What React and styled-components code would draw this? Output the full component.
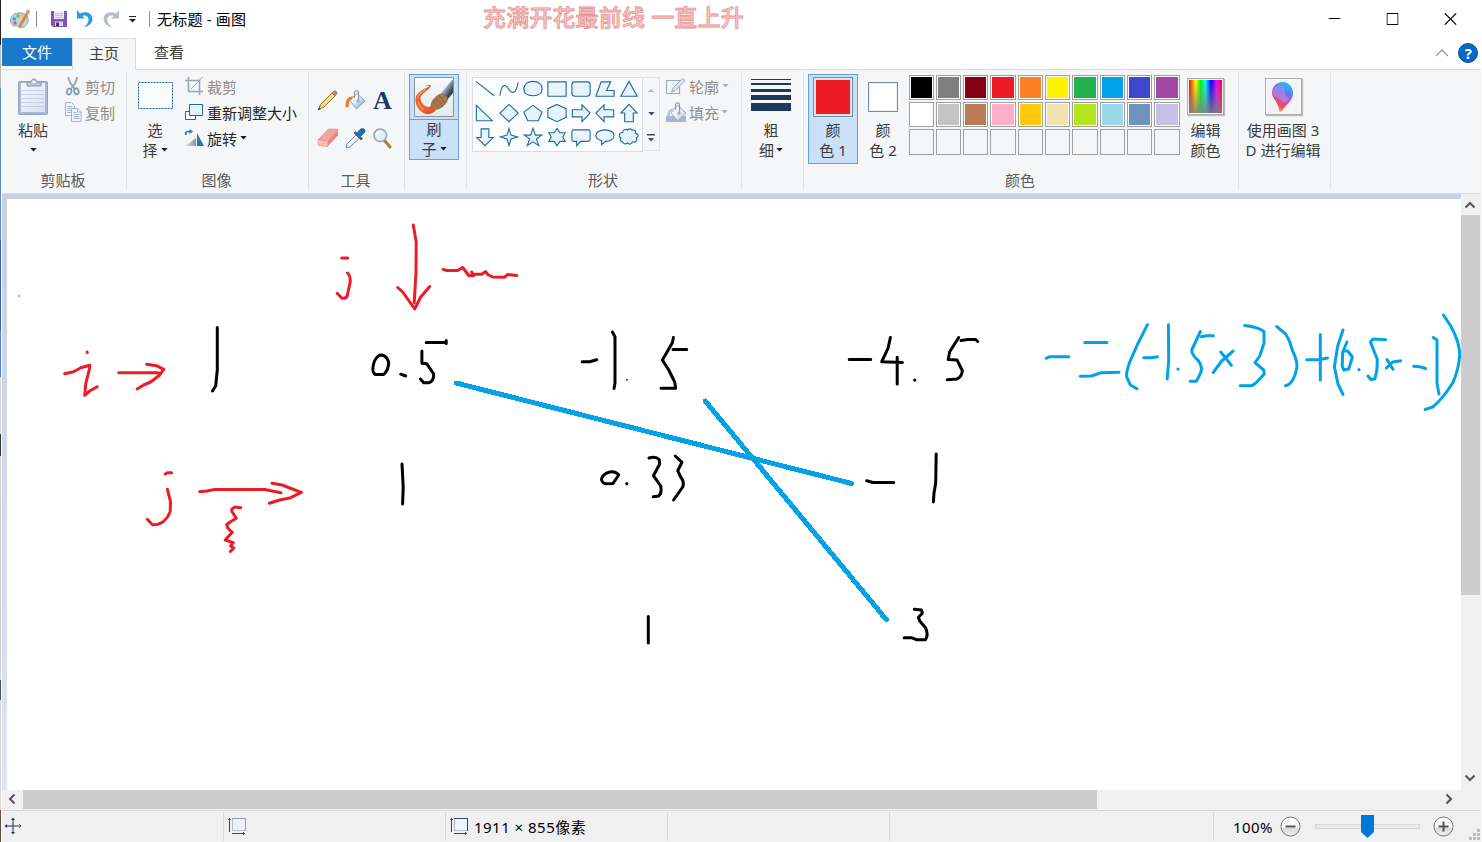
import React from "react";
import styled, { createGlobalStyle } from "styled-components";

const Global = createGlobalStyle`
  html, body { margin: 0; padding: 0; overflow: hidden; }
  body { font-family: "Noto Sans", "Noto Sans CJK SC", sans-serif; font-size: 15px; color: #000; }
  * { box-sizing: border-box; }
  svg { display: block; flex: none; }
`;

const Desktop = styled.div`
  width: 1482px;
  height: 842px;
  display: flex;
  position: relative;
  background: #fff;
`;
const DesktopEdge = styled.div`
  width: 1px;
  background: linear-gradient(#222 0 45px, #b9b4ae 45px 88px, #5a8ac6 88px 240px, #3f5f94 240px 330px, #4f80cf 330px 377px, #dcd8d4 377px 434px, #333 434px 456px, #d4cfd0 456px 680px, #456 680px 700px, #d9d4d2 700px 810px, #6b4a42 810px);
`;
const Window = styled.div`
  flex: 1;
  display: flex;
  flex-direction: column;
  padding: 0 1px 0 1px;
`;

const TitleBar = styled.header`
  height: 38px;
  display: flex;
  align-items: center;
  padding-left: 8px;
`;
const QuickItem = styled.span`
  display: flex;
  margin-left: ${(p) => p.$gap}px;
`;
const Rule = styled.span`
  width: 1px;
  height: 16px;
  margin-left: ${(p) => p.$gap}px;
  background: #8c8c8c;
`;
const Title = styled.span`
  margin-left: 7px;
  padding-bottom: 2px;
  letter-spacing: 0.2px;
  white-space: pre;
`;
const WindowButtons = styled.div`
  margin-left: auto;
  display: flex;
  gap: 46px;
  padding-right: 24px;
  transform: translateX(-0.5px);
`;
const Ticker = styled.div`
  position: absolute;
  left: 483px;
  top: 1px;
  line-height: 32px;
  font-size: 23px;
  font-weight: 500;
  letter-spacing: 0.15px;
  white-space: pre;
  color: #ffc6c6;
  -webkit-text-stroke: 0.8px #e39494;
`;

const TabRow = styled.nav`
  height: 32px;
  display: flex;
  border-bottom: 1px solid #dadbdc;
  position: relative;
`;
const Tab = styled.div`
  width: ${(p) => p.$w}px;
  height: ${(p) => (p.$kind === "file" ? 28 : 32)}px;
  line-height: ${(p) => (p.$kind === "active" ? 28 : 29)}px;
  text-align: center;
  color: ${(p) => (p.$kind === "file" ? "#fff" : "#3b3b3b")};
  background: ${(p) => ({ file: "#1979ca", active: "#f5f6f7" })[p.$kind] || "none"};
  border: ${(p) => (p.$kind === "active" ? "1px solid #dadbdc" : "0")};
  border-bottom: 0;
`;
const TabTools = styled.div`
  margin-left: auto;
  display: flex;
  align-items: center;
  gap: 10px;
  padding: 0 3px 2px 0;
`;

const Ribbon = styled.section`
  height: 124px;
  display: flex;
  padding: 2px 0 3px;
  background: #f5f6f7;
  border-bottom: 1px solid #dadbdc;
`;
const GroupBox = styled.div`
  width: ${(p) => p.$w}px;
  display: flex;
  flex-direction: column;
  border-right: 1px solid #e2e3e4;
`;
const GroupBody = styled.div`
  height: 98px;
  display: flex;
  align-items: flex-start;
  padding: 2px 0 0 ${(p) => p.$pad}px;
`;
const GroupLabel = styled.div`
  line-height: 20px;
  padding-right: 2px;
  text-align: center;
  color: #5a5a5a;
`;
const BigButton = styled.div`
  width: ${(p) => p.$w}px;
  height: ${(p) => p.$h || 90}px;
  flex: none;
  display: flex;
  flex-direction: column;
  align-items: center;
  color: #3b3b3b;
  background: ${(p) => (p.$on ? "#c9e0f7" : "none")};
  box-shadow: ${(p) => (p.$on ? "inset 0 0 0 1px #62a2e4" : "none")};
`;
const BigIcon = styled.div`
  height: ${(p) => p.$h || 47}px;
  width: 100%;
  display: flex;
  align-items: center;
  justify-content: center;
  padding-bottom: ${(p) => p.$lift ?? 1}px;
  border-bottom: ${(p) => (p.$split ? "1px solid #62a2e4" : "0")};
`;
const Line = styled.div`
  height: 20px;
  line-height: 18px;
  padding-bottom: 2px;
  display: flex;
  align-items: center;
  justify-content: center;
  gap: ${(p) => p.$gap || 0}px;
  white-space: pre;
`;
const SmallColumn = styled.div`
  display: flex;
  flex-direction: column;
  margin: -1px 0 0 ${(p) => p.$gap}px;
`;
const SmallButton = styled.div`
  height: 26px;
  display: flex;
  align-items: center;
  gap: ${(p) => p.$gap || 4}px;
  color: ${(p) => (p.$off ? "#8d8d8d" : "#262626")};
`;
const ToolGrid = styled.div`
  display: grid;
  grid-template-columns: 27px 28px 27px;
  grid-auto-rows: 38px;
  place-items: center;
  padding: 7px 0 0;
`;
const LetterIcon = styled.span`
  font: bold 26px/25px "Liberation Serif", serif;
  color: #1f3a63;
`;
const Gallery = styled.div`
  display: flex;
  margin-top: 3px;
`;
const Shapes = styled.div`
  width: 171px;
  height: 75px;
  display: grid;
  grid-template-columns: repeat(7, 24px);
  grid-auto-rows: 24px;
  background: #fbfcfd;
  border: 1px solid #dcdddf;
`;
const Spinner = styled.div`
  width: 17px;
  height: 74px;
  display: grid;
  grid-template-rows: 1fr 1fr 1fr;
  place-items: center;
  border: 1px solid #e2e3e5;
  border-left: 0;
`;
const Bars = styled.div`
  width: 40px;
  height: 32px;
  display: flex;
  flex-direction: column;
  justify-content: space-between;
`;
const Bar = styled.span`
  height: ${(p) => p.$h}px;
  background: #1e395b;
`;
const Chip = styled.span`
  width: ${(p) => p.$s}px;
  height: ${(p) => p.$s}px;
  padding: ${(p) => p.$inset}px;
  background: ${(p) => p.$c} content-box;
  border: 1px solid #7f8a95;
  box-shadow: inset 0 0 0 1px ${(p) => (p.$s > 30 ? "#dceaf7" : "#f0f0f0")};
`;
const Palette = styled.div`
  margin: 1px 0 0 1px;
  flex: none;
  display: grid;
  grid-template-columns: 25px 25px 25px 26px 25px 25px 26px 25px 25px 26px;
  grid-template-rows: 25px 25px 26px;
  gap: 2px;
`;
const Swatch = styled.span`
  border: 1px solid #a0a0a0;
  background: ${(p) => p.$c || "#f5f6f7"};
  box-shadow: inset 0 0 0 1px ${(p) => (p.$c ? "#fff" : "#f5f6f7")};
`;
const Framed = styled.span`
  width: 37px;
  height: 37px;
  padding: 1px;
  border: 1px solid #adadad;
  box-shadow: 1px 1px 1px #bbb;
  background-color: #fff;
  background-image: ${(p) => (p.$rainbow ? "linear-gradient(#80808000, #808080e0), linear-gradient(90deg,#f00,#ff0 20%,#0f0 35%,#0ff 50%,#00f 67%,#f0f 85%,#f00)" : "linear-gradient(#f3f3f3, #f3f3f3)")};
  background-origin: content-box;
  background-clip: content-box;
  display: flex;
  align-items: center;
  justify-content: center;
`;

const Middle = styled.main`
  height: 596px;
  display: flex;
`;
const Workspace = styled.div`
  width: 1459px;
  padding: 5px 0 0 5px;
  background: linear-gradient(#c7d0e2, #dbe5f3);
`;
const Paper = styled.div`
  height: 591px;
  background: #fff;
`;
const VScroll = styled.div`
  width: 20px;
  display: flex;
  flex-direction: column;
  background: #f0f0f0;
`;
const HScroll = styled.div`
  height: 20px;
  display: flex;
  background: #f0f0f0;
`;
const ScrollEnd = styled.div`
  width: ${(p) => p.$w}px;
  height: ${(p) => p.$h}px;
  margin: ${(p) => p.$m || 0};
  display: flex;
  align-items: center;
  justify-content: center;
`;
const ScrollThumb = styled.div`
  width: ${(p) => p.$w}px;
  height: ${(p) => p.$h}px;
  background: #cdcdcd;
`;
const Status = styled.footer`
  height: 32px;
  display: flex;
  background: #f0f0f0;
  border-top: 1px solid #d7d7d7;
`;
const StatusCell = styled.div`
  width: ${(p) => p.$w}px;
  margin: 1px 0;
  padding: 0 0 1px ${(p) => p.$pad ?? 4}px;
  display: flex;
  align-items: center;
  gap: 5px;
  letter-spacing: 0.48px;
  border-right: 1px solid #d7d7d7;
`;
const ZoomBar = styled.div`
  flex: 1;
  display: flex;
  align-items: center;
  padding-left: 19px;
`;
const ZoomValue = styled.span`
  width: 47px;
  letter-spacing: 0.4px;
`;
const Track = styled.div`
  width: 105px;
  height: 5px;
  margin: 0 13px 0 14px;
  background: #e7eaea;
  border: 1px solid #d6d6d6;
  display: flex;
  align-items: center;
  padding-left: 45px;
`;
const Grip = styled.div`
  margin-left: auto;
  align-self: flex-end;
`;

const Caret = ({ c = "#1e1e1e" }) => (
  <svg width="7" height="4" viewBox="0 0 7 4"><path d="M.3 0h6.400L3.500 3.600z" fill={c} /></svg>
);
const Chevron = ({ d, c = "#555", w = 2 }) => (
  <svg width="12" height="12" viewBox="0 0 12 12"><path d={d} fill="none" stroke={c} strokeWidth={w} /></svg>
);

const PaletteLogo = () => (
  <svg width="21" height="20" viewBox="0 0 21 20">
    <path d="M8 4C3 4.500 .5 8 .6 12c.1 4 3 5.500 5.500 4.800 1.500-.4 2 .8 3.500 1.500 4 1.200 8.500-2.500 8.600-7.500C18.300 6 13.500 3.200 8 4z" fill="#b8d8ea" stroke="#7ea5bd" />
    <circle cx="8" cy="7" r="1.900" fill="#7fc34c" /><circle cx="4.300" cy="10" r="1.700" fill="#4b93d5" />
    <circle cx="5" cy="14" r="1.700" fill="#de6550" /><circle cx="12.500" cy="6.500" r="1.700" fill="#edc84a" />
    <path d="M18 3L10 17" stroke="#d88932" strokeWidth="2.800" strokeLinecap="round" />
    <path d="M16 1.500l3-1 .8 3.500-3 2z" fill="#d49a72" />
  </svg>
);
const SaveIcon = () => (
  <svg width="16" height="16" viewBox="0 0 16 16">
    <path d="M0 0h16v16H2l-2-2z" fill="#7d57b5" /><path d="M3 0h10v8H3z" fill="#f0eaf8" />
    <path d="M4 2.500h8M4 4.500h8M4 6.500h8" stroke="#c6b7dc" /><path d="M4 10.500h8V15H4z" fill="#d8d8df" /><path d="M5 11.500h3V15H5z" fill="#4a3570" />
  </svg>
);
const TurnIcon = ({ flip, c }) => (
  <svg width="18" height="18" viewBox="0 0 18 18">
    <g transform={flip ? "translate(18 0) scale(-1 1)" : undefined}>
      <path d="M1 0v8.500h8L6.300 6C10 4.500 13.300 7 12.400 11c-.5 2.500-2.200 4.500-4.600 6.200C13.500 16 17 12.500 16.400 8 15.600 2.500 9 .6 4 3.600z" fill={c} />
    </g>
  </svg>
);
const MenuMark = () => (
  <svg width="7" height="7" viewBox="0 0 7 7"><path d="M0 .5h7" stroke="#222" /><path d="M0 3h7L3.500 6.500z" fill="#222" /></svg>
);
const ClipboardIcon = () => (
  <svg width="34" height="38" viewBox="-1 0 34 38">
    <defs><linearGradient id="pg" x2="1" y2="1"><stop stopColor="#f8fbff" /><stop offset="1" stopColor="#d3e0f1" /></linearGradient></defs>
    <rect x="1.500" y="3.500" width="29" height="33" rx="1.500" fill="#a9b7d0" stroke="#94a3c2" />
    <path d="M4 5h24v29H4z" fill="url(#pg)" />
    <path d="M5 12.500h22M5 16.500h22M5 20.500h22M5 24.500h22M5 28.500h22" stroke="#c3d0e4" />
    <path d="M10 4h4c0-4 6-4 6 0h4v4H10z" fill="#b6c3d8" stroke="#8a99b7" /><path d="M15.500 3h3v2h-3z" fill="#f5f6f7" />
  </svg>
);
const ScissorsIcon = () => (
  <svg width="16" height="20" viewBox="0 0 16 20" fill="none">
    <path d="M3.500 1c0 4 2 7 6.500 12M12 1c0 4-2 7-6 12" stroke="#9aa9c2" strokeWidth="2" />
    <ellipse cx="4.300" cy="15.500" rx="2.200" ry="3" stroke="#8597b5" strokeWidth="1.800" transform="rotate(15 4 15)" />
    <ellipse cx="11.300" cy="15.500" rx="2.200" ry="3" stroke="#8597b5" strokeWidth="1.800" transform="rotate(-15 11 15)" />
  </svg>
);
const CopyIcon = () => (
  <svg width="17" height="20" viewBox="0 0 17 20" fill="#f1f6fc" stroke="#a3b3cc">
    <path d="M.5.5h6l3 3v10h-9z" /><path d="M2 4.500h5M2 6.500h5M2 8.500h5M2 10.500h5" />
    <path d="M6.500 6.500h6l3.500 3V19.500H6.500z" /><path d="M12.500 6.500v3.500h3.500M8.500 10.500h3M8.500 12.500h6M8.500 14.500h6M8.500 16.500h6" />
  </svg>
);
const SelectIcon = () => (
  <svg width="36" height="27" viewBox="-1 0 36 27"><rect x=".5" y=".5" width="34" height="26" fill="#f9fbfd" stroke="#1464a5" strokeDasharray="2 1" /></svg>
);
const CropIcon = () => (
  <svg width="18" height="18" viewBox="0 0 18 18" fill="none" stroke="#94a5bf">
    <path d="M0 3.500h14.500V18M3.500 0v14.500H18" strokeWidth="1.600" /><path d="M17.500 0L6 12" />
  </svg>
);
const ResizeIcon = () => (
  <svg width="18" height="16" viewBox="0 0 18 16" stroke="#1b66a9">
    <path d="M.5 7.500h10v8H.5z" fill="#fff" /><path d="M4.500.5h13v11h-13z" fill="#e7f3f9" /><path d="M5.500 1.500h11v9" fill="none" stroke="#fff" />
  </svg>
);
const RotateIcon = () => (
  <svg width="19" height="18" viewBox="0 0 19 18">
    <defs><linearGradient id="rg" x2="1"><stop stopColor="#e6e6e6" /><stop offset="1" stopColor="#939393" /></linearGradient></defs>
    <path d="M0 17h11V9z" fill="url(#rg)" /><path d="M12 4v13h7z" fill="#2878b5" /><path d="M.8 6V4.500C.8 3 2 2.500 3 2.500h2" fill="none" stroke="#1f78d0" strokeWidth="1.600" /><path d="M4.500 0L8 2.500 4.500 5z" fill="#1f78d0" />
  </svg>
);
const PencilIcon = () => (
  <svg width="22" height="22" viewBox="0 0 22 22">
    <path d="M1.500 20.500l2-5L15 4l3 3L7 18z" fill="#f4d371" stroke="#806024" strokeWidth=".8" /><path d="M5 16.500L16.500 5" stroke="#fff2b5" /><path d="M1 21l1-3 2 2z" fill="#333" />
    <path d="M15 4L17 2c1.500-.8 3.800 1.300 3 3l-2 2z" fill="#db7474" stroke="#788b78" strokeWidth=".7" />
  </svg>
);
const BucketIcon = ({ off }) => (
  <svg width="21" height="21" viewBox="0 0 21 21">
    <defs><linearGradient id={off ? "bo" : "bk"} x2="1" y2="1"><stop offset=".3" stopColor="#fff" /><stop offset="1" stopColor={off ? "#b5c3d9" : "#5ba2dc"} /></linearGradient></defs>
    {off && <path d="M0 14h20v6H0z" fill="#a7b5ce" />}
    <path d="M4.500 10L12 3.500l8 7.500-8.500 8z" fill={off ? "url(#bo)" : "url(#bk)"} stroke={off ? "#9aaac4" : "#7fa7cd"} />
    <path d="M9.500 8V3c0-3 4-3 4 0v8" fill="none" stroke="#9299a3" strokeWidth="1.200" /><circle cx="13" cy="11" r="1.500" fill="#9aa5b4" />
    <path d={off ? "M8 6.500C4 6 1 9 1 14h3c0-3 1-4 4-4.500z" : "M8 6.500C3 6 .5 9 .5 17c3 1.500 4-1 3.500-3 0-3 1-4 3-4.500z"} fill={off ? "#bccade" : "#ee7a45"} />
  </svg>
);
const EraserIcon = () => (
  <svg width="22" height="20" viewBox="0 0 22 20">
    <path d="M10.500 2Q11 1 12.500 1l7.500.3Q21.300 1.500 20.500 3L11 13.300 1.500 11.500z" fill="#f7a3a3" stroke="#dd8a8a" strokeWidth=".8" />
    <path d="M11 13.300L21 2.500v5L10.500 18.500z" fill="#e58585" /><path d="M1.300 11.500l9.700 1.800-.5 5.400-8.700-1.200q-1-.3-.9-1.500z" fill="#fbbdb0" stroke="#dd8a8a" strokeWidth=".6" />
  </svg>
);
const PickerIcon = () => (
  <svg width="21" height="21" viewBox="0 0 21 21">
    <path d="M1 20l1-4L11 7l3.300 3.300L5 19z" fill="#e9f1f6" stroke="#748ba0" /><path d="M9 5l7 7 1.500-1.500-2-2C17 7 20 5 20 3c0-3-3.500-3-5-1.500L12 5l-1.500-1.500z" fill="#246eae" stroke="#174f86" strokeWidth=".6" />
  </svg>
);
const MagnifierIcon = () => (
  <svg width="19" height="21" viewBox="0 0 19 21">
    <path d="M11.500 12.500l5.500 6.500" stroke="#a07a51" strokeWidth="3" strokeLinecap="round" /><circle cx="7.300" cy="7.300" r="6.300" fill="#dff0fa" stroke="#9ba5ad" strokeWidth="1.500" /><path d="M4 7c0-2 1.500-3.500 3.500-3.500" stroke="#fff" strokeWidth="2" fill="none" />
  </svg>
);
const BrushIcon = () => (
  <svg width="40" height="40" viewBox="0 0 40 40">
    <defs>
      <linearGradient id="bf" x2="0" y2="1"><stop stopColor="#f8fafb" /><stop offset="1" stopColor="#e1eced" /></linearGradient>
      <linearGradient id="bh" x2=".9" y2="1"><stop offset=".2" stopColor="#f4f6f8" /><stop offset=".5" stopColor="#8497aa" /><stop offset=".75" stopColor="#33455a" /></linearGradient>
    </defs>
    <path d="M.5.5h39v39H.5z" fill="url(#bf)" stroke="#8a959c" />
    <path d="M11.500 10C13 7.500 16.500 7 16.800 8.800 17 11 14 12.500 11 15 6 18.500 5.500 22 8 26c2 3 5 4.500 9 4l4 4c-3 3-7.500 4-10.500 2.500C4.500 33.500 1 28 1.500 21.500 2 16.500 8 12.500 12 11c2-.8 3-1.300 3.300-2-1-.5-2.300.2-3.800 1z" fill="#ee5f2e" />
    <path d="M3.500 21c1-4 4-6.500 8-8.500M4 25c1 3 3 6 6 7.500" fill="none" stroke="#ff9b70" strokeWidth="1.200" />
    <path d="M38.500 2.500L27 16l6.500 6.500 5.500-6.500V3z" fill="url(#bh)" />
    <path d="M17.500 26.500c1-4 5.500-8.500 9.500-9.500 5-.8 8 4 5.500 8-2.500 4.500-7 7-11 7.300-2.500-.6-4.500-3-4-5.800z" fill="#a57a4c" stroke="#85603a" strokeWidth=".8" />
    <path d="M19 25c3 2 5 4 6 6M21.500 22c4 2 6 5 6.500 7.500M25 19c3 2 5 4 5.500 7" stroke="#75512f" strokeDasharray="1 1" fill="none" />
    <path d="M10.500 36c5 1.500 9.500 0 12-3.500-2.500-.3-5-2.500-5-6-1.500 4-3 7-7 9.500z" fill="#e4552b" />
  </svg>
);
const OutlineIcon = () => (
  <svg width="20" height="18" viewBox="0 0 20 18" fill="none" stroke="#9aaac2">
    <path d="M14 3.500H.5v13h13V10" strokeWidth="1.200" /><path d="M5.500 15l1.500-4L16.500 1.500l2.500 2L9.500 13.500z" fill="#dce5f0" />
  </svg>
);
const BalloonIcon = () => (
  <svg width="24" height="32" viewBox="0 0 24 32">
    <defs><linearGradient id="bl" x1=".7" x2=".3" y2="1"><stop stopColor="#18c7f0" /><stop offset=".35" stopColor="#6e72ed" /><stop offset=".6" stopColor="#d2559e" /><stop offset=".8" stopColor="#e94b66" /><stop offset="1" stopColor="#ffbd22" /></linearGradient></defs>
    <path d="M12 1C5 1 1 6 1 12c0 6 7 9 7 18 1 1 2 .8 3 0 2-5 11-9 11-18 0-7-5-11-10-11z" fill="url(#bl)" /><path d="M2 12c0-6 5-9 9-8 5 2 0 10 8 14l-7 4C11 17 3 17 2 12z" fill="#b299ff" opacity=".45" />
  </svg>
);

const SHAPES = [
  "M3 4L22 19", "M3 19C5 5 9 7 12 12s8 6 10-7", "M3 12c0-5 4-8 9.500-8S22 7 22 12s-4 7-9.500 7S3 17 3 12z", "M3 4.500h19v15H3z",
  "M6 4.500h13q3 0 3 3v9q0 3-3 3H6q-3 0-3-3v-9q0-3 3-3z", "M8.500 4.500h10l-4.500 9h8v6H3z", "M12.500 4L21 19.500H4z",
  "M3.500 4v16H20z", "M12.500 3L22 12l-9.500 9L3 12z", "M12.500 4L22 11l-4 9H7L3 11z", "M12.500 3L22 7.500v9L12.500 21 3 16.500v-9z",
  "M3.500 8.500h10v-5L22 12l-8.500 9v-5h-10z", "M21.500 8.500h-10v-5L3 12l8.500 9v-5h10z", "M12.500 3L21 12h-4v9H8v-9H4z",
  "M8.500 3.500h8v9H21L12.500 21 4 12.500h4.500z", "M12.500 3l2 7 7 2-7 2-2 7-2-7-7-2 7-2z", "M12.500 3l2.500 7h6.500L16 14l2.500 7-6-4-6 4L9 14l-5.500-4H10z",
  "M12.500 3l3 4.500H21L18.500 12l2.500 4.500h-5.500l-3 4.500-3-4.500H4L6.500 12 4 7.500h5.500z", "M5 4.500h15q2 0 2 2v8q0 2-2 2h-8L8 21v-4.500H5q-2 0-2-2v-8q0-2 2-2z",
  "M9 20v-4C5 15 3 13 3 10.500 3 7 7 4.500 12.500 4.500S22 7 22 10.500 18 16.500 13 16.500z",
  "M6 7c0-3 4-4 5-2 1-2 4-2 5 0 3-1 4 1 3 3 4 1 4 4 1 5 2 3-1 5-4 4-1 3-4 3-5 1-2 2-5 1-5-1-3 0-3-2-2-4-3-2-2-5 2-6z",
];
const PALETTE = [
  "#000000", "#7f7f7f", "#880015", "#ed1c24", "#ff7f27", "#fff200", "#22b14c", "#00a2e8", "#3f48cc", "#a349a4",
  "#ffffff", "#c3c3c3", "#b97a57", "#ffaec9", "#ffc90e", "#efe4b0", "#b5e61d", "#99d9ea", "#7092be", "#c8bfe7",
  ...Array(10).fill(null),
];

const RED = [
  "M342 258L348 258", "M347.800 273Q351 276 350.500 282L347.500 296Q346 299 342 298L337.500 293.300",
  "M413.600 225L416.500 242L416.300 272L414.500 303", "M398 287.500L403 292L415 309L421 297L430 286.500",
  "M443.500 269.300L447 270.500L458 270.500L463 267.500L469 275.500L474 275.500L472 272M475 274.300L482 274.300L486 271.500L488 274.500L493 277L504.500 277.300L508 274.500L517 275.500",
  "M65 373.700L74 371.700L81 367.700L90 365.300L90 368L86 384L85 395.300L90 391L97.500 386.700", "M87.400 352L87.600 352.600",
  "M119 372.700L159 372.700M147 364.300L156.700 365.700L164 369.300L160 375L151 382L144 385L137.400 389",
  "M165.500 474L168 472.700L172 472.700M167.700 489.300L170.800 501.700L170.500 511.700Q168 518 163.600 521.700Q157 525.500 152.500 524.500L147.600 519.300",
  "M200 491.700L207 491L215 489.500L265 489.500L281.300 492.700M272.400 483.300L282.400 485L290 488L301.600 492.300L291 497.700L280 500L269.600 503.300",
  "M241 507.700L234.800 507Q231 509 232.400 511.700L236.600 518.300L232 521L227 524.500L228 528L232.600 532.300L225.500 540L233.500 542.700L231 546L234 548L230.700 551.500",
];
const BLACK = [
  "M217.600 327.500L217.600 370L216 386L212.800 391", "M380 355.300Q375 358 373.600 365Q372 373 376 374.500L384 374.500Q389 370 389 362Q386 354 380 355.300", "M401 374.200L406 376",
  "M422.200 351L422.200 363.300L427 363.700L434 374Q434 382 429 382.700L424 382.700L420.700 379M426.500 342.500L446.500 342.500M446.500 340.500L446.500 343.500", "M402.300 464L403.500 487L402.900 504",
  "M582.500 361.700L590 361.700L597 359.700", "M612.700 332L615.300 336.700L615.300 383L614.300 388.500",
  "M673.700 337.500L672.700 342.700L662.700 360L669 370L675 382L676 388.300L661.300 388.300M673.300 349.600L687 349.600",
  "M849.500 359.500L871 359.500M890.700 337.500L888.300 348.300L882 361.700L902.700 362.500M897.500 357.300L897.500 384", "M914.900 380L915.200 380.200",
  "M959 337.500L950 351.700L948.500 359.500L957.300 360L962.700 370.700Q962 377 957.300 379L947.500 379.700M961.300 340.500L968 339.500L976 339.500L978 341.500",
  "M610 472Q603 474 601.800 479Q602 483 606 483.700L613.300 483.500L619 475Q616 471 610 472M627 483.600L627.200 483.800",
  "M649.300 458Q656 456 659.500 459.500L660 464L653.700 475.700L661 486Q662.500 493 659 496L653.500 496.700",
  "M675.500 456L682.300 462.300L678 470.700L681 477Q685 482 683 487L673.900 500",
  "M867 480.700L873.300 482.500L894 482.500M936.500 454L936 483.300L934.300 493L933.700 502M648.600 616.500L648.600 643",
  "M914.700 609.300L921.700 610L922.700 613.300L918.700 617.300L920 621L926 628Q929 635 925.700 639.700L916.700 639.700L911.700 637.700L904.500 637.700",
];
const BLUE = [
  "M1046.500 358.300L1050 356.700L1069 356.700M1085 342.600L1107.300 342.600M1080.500 376.300L1091.700 376L1101.700 372.700L1119.300 372.300",
  "M1147.700 324.700L1138 344L1130 362Q1126 374 1127 377L1130.700 385L1137.300 388.700M1144 357.700L1152 357.700L1157.700 356.700M1168.700 324.700L1169 360L1167.500 379M1178.200 369L1178.500 369.200",
  "M1200.700 331.500L1192 350Q1192 355 1199 361Q1204 369 1200 375L1196.700 381.300L1190.500 381.300M1201.700 336.700L1207 335.700L1213.700 335.700",
  "M1221 352L1226 358L1231.700 365.300M1233.500 351L1222 361L1213.500 372.500",
  "M1245 325.500Q1259 327 1264.300 331.700L1264.300 343.300L1260 356L1255.300 362.700L1264 370L1264.500 374L1258 381Q1254 386 1250 385.700L1240.500 385.700",
  "M1277 326.500L1286 334Q1291 342 1292.500 350Q1299 363 1296.700 370Q1293 385 1285.700 385.700",
  "M1307 359.700L1319 359.700L1327.700 358M1320.600 334.500L1320.600 380M1343.300 330L1338 346L1334.700 366.700L1338.300 384L1343.300 394.500",
  "M1347.300 342L1343 352L1342.500 366L1344 370L1349 369L1352.700 357L1348 351L1345 351M1359.200 369.500L1359.400 369.800",
  "M1386 339.700L1373.300 339L1370.700 342L1377.500 359Q1378 370 1375 379L1371 379.500L1368.300 376",
  "M1387.300 359.500L1393.300 369.300M1401 360.700L1393 362L1386.700 368M1414 366.300L1420 366.700L1426 368.500M1433.500 337.500L1437.300 340L1437.300 383.300L1439.300 394",
  "M1443.700 315L1451 326Q1460 342 1460 355Q1459 370 1453 383Q1442 400 1433 407L1425.500 409.500",
];
const Drawing = () => (
  <svg width="1454" height="591" viewBox="7.300 199 1454 591" fill="none" strokeWidth="3" strokeLinecap="round" strokeLinejoin="round">
    <g stroke="#ed1c24">{RED.map((d) => <path key={d} d={d} />)}</g>
    <g stroke="#000">{BLACK.map((d) => <path key={d} d={d} />)}</g>
    <g stroke="#00a2e8">{BLUE.map((d) => <path key={d} d={d} />)}</g>
    <path d="M456.500 383L852 483.500M705.500 401L886.700 619.700" stroke="#00a2e8" strokeWidth="5" shapeRendering="crispEdges" />
    <path d="M19 295h1v2h-1z" fill="#d22" /><path d="M626.500 379h1.500v1.500h-1.500z" fill="#000" />
  </svg>
);

const MoveIcon = () => (
  <svg width="18" height="18" viewBox="0 0 18 18" fill="#1e395b"><path d="M8.500 2h1v14h-1zM2 8.500h14v1H2zM9 .5l2 2.500h-4zM9 17.500l-2-2.500h4zM.5 9l2.500-2v4zM17.500 9l-2.500-2v4z" /></svg>
);
const SizeIcon = ({ dotted }) => (
  <svg width="19" height="18" viewBox="0 0 19 18" fill="none" stroke="#2b4a70">
    <rect x="4.500" y="1.500" width="13" height="12" fill={dotted ? "none" : "#eaf5fc"} strokeDasharray={dotted ? "1 1" : undefined} />
    <path d="M4.500 2v11.500M4 13.500h13" stroke="#b7bec8" />
    <path d="M1.500 1v14M4 16.500h13" /><path d="M0 2.500h3M15.500 15v3" strokeWidth=".8" />
  </svg>
);
const RoundButton = ({ plus }) => (
  <svg width="21" height="21" viewBox="0 0 21 21">
    <defs><linearGradient id="rb" x2="0" y2="1"><stop stopColor="#fff" /><stop offset=".55" stopColor="#f5f5f5" /><stop offset=".6" stopColor="#d9d9d9" /><stop offset="1" stopColor="#f2f2f2" /></linearGradient></defs>
    <circle cx="10.500" cy="10.500" r="9.500" fill="url(#rb)" stroke="#777" /><path d={plus ? "M5.500 10.500h10M10.500 5.500v10" : "M5.500 10.500h10"} stroke="#555" strokeWidth="2" />
  </svg>
);

const Group = ({ w, pad, label, children }) => (
  <GroupBox $w={w}>
    <GroupBody $pad={pad}>{children}</GroupBody>
    <GroupLabel>{label}</GroupLabel>
  </GroupBox>
);

export default function App() {
  return (
    <Desktop>
      <Global />
      <DesktopEdge />
      <Window>
        <TitleBar>
          <PaletteLogo />
          <Rule $gap={5} />
          <QuickItem $gap={14}><SaveIcon /></QuickItem>
          <QuickItem $gap={9}><TurnIcon c="#2b9be0" /></QuickItem>
          <QuickItem $gap={8}><TurnIcon c="#b2bfd0" flip /></QuickItem>
          <QuickItem $gap={9}><MenuMark /></QuickItem>
          <Rule $gap={13} />
          <Title>无标题 - 画图</Title>
          <WindowButtons>
            <Chevron d="M0 5.500h12" c="#000" w={1} />
            <Chevron d="M.5.500h11v11H.5z" c="#000" w={1} />
            <Chevron d="M0 0l12 12M12 0L0 12" c="#000" w={1.100} />
          </WindowButtons>
        </TitleBar>

        <TabRow>
          <Tab $w={70} $kind="file">文件</Tab>
          <Tab $w={64} $kind="active">主页</Tab>
          <Tab $w={66}>查看</Tab>
          <TabTools>
            <Chevron d="M0 9l6-6 6 6" c="#9a9a9a" w={1.300} />
            <svg width="20" height="20" viewBox="0 0 20 20">
              <circle cx="10" cy="10" r="9.500" fill="#0669c7" stroke="#0a4f93" />
              <text x="10.300" y="15.500" textAnchor="middle" fontSize="15" fontWeight="700" fill="#fff">?</text>
            </svg>
          </TabTools>
        </TabRow>

        <Ribbon>
          <Group w={125} pad={10} label="剪贴板">
            <BigButton $w={42}>
              <BigIcon><ClipboardIcon /></BigIcon>
              <Line>粘贴</Line>
              <Line>{" "}<Caret /></Line>
            </BigButton>
            <SmallColumn $gap={11}>
              <SmallButton $off><ScissorsIcon />剪切</SmallButton>
              <SmallButton $off $gap={3}><CopyIcon />复制</SmallButton>
            </SmallColumn>
          </Group>

          <Group w={182} pad={9} label="图像">
            <BigButton $w={38}>
              <BigIcon $lift={4}><SelectIcon /></BigIcon>
              <Line>选</Line>
              <Line $gap={3}>择<Caret /></Line>
            </BigButton>
            <SmallColumn $gap={11}>
              <SmallButton $off><CropIcon />裁剪</SmallButton>
              <SmallButton><ResizeIcon />重新调整大小</SmallButton>
              <SmallButton $gap={3}><RotateIcon />旋转<Caret /></SmallButton>
            </SmallColumn>
          </Group>

          <Group w={96} pad={5} label="工具">
            <ToolGrid>
              <PencilIcon /><BucketIcon /><LetterIcon>A</LetterIcon>
              <EraserIcon /><PickerIcon /><MagnifierIcon />
            </ToolGrid>
          </Group>

          <Group w={62} pad={4} label="">
            <BigButton $w={50} $h={86} $on>
              <BigIcon $h={46} $lift={0} $split><BrushIcon /></BigIcon>
              <Line>刷</Line>
              <Line $gap={3}>子<Caret /></Line>
            </BigButton>
          </Group>

          <Group w={275} pad={5} label="形状">
            <Gallery>
              <Shapes>
                {SHAPES.map((d, i) => (
                  <svg key={d} width="24" height="24" viewBox="0 1 25 24">
                    <path d={d} fill={i < 2 ? "none" : "#e9f4f9"} stroke="#1c69a9" strokeWidth="1.150" />
                  </svg>
                ))}
              </Shapes>
              <Spinner>
                <svg width="6" height="4" viewBox="0 0 6 4"><path d="M0 4h6L3 1z" fill="#b0b4c0" /></svg>
                <Caret c="#3d4d66" />
                <svg width="8" height="8" viewBox="0 0 8 8" fill="#3d4d66"><path d="M0 0h8v1.500H0zM1 4h6L4 7.500z" /></svg>
              </Spinner>
            </Gallery>
            <SmallColumn $gap={6}>
              <SmallButton $off $gap={3}><OutlineIcon />轮廓<Caret c="#b0b0b0" /></SmallButton>
              <SmallButton $off $gap={2}><BucketIcon off />填充<Caret c="#b0b0b0" /></SmallButton>
            </SmallColumn>
          </Group>

          <Group w={62} pad={4} label="">
            <BigButton $w={50}>
              <BigIcon $lift={5}>
                <Bars><Bar $h={1} /><Bar $h={2} /><Bar $h={3} /><Bar $h={5} /><Bar $h={8} /></Bars>
              </BigIcon>
              <Line>粗</Line>
              <Line $gap={2}>细<Caret /></Line>
            </BigButton>
          </Group>

          <Group w={435} pad={4} label="颜色">
            <BigButton $w={50} $on>
              <BigIcon><Chip $s={40} $inset={2} $c="#ed1c24" /></BigIcon>
              <Line>颜</Line>
              <Line>色 1</Line>
            </BigButton>
            <BigButton $w={50}>
              <BigIcon><Chip $s={30} $inset={1} $c="#ffffff" /></BigIcon>
              <Line>颜</Line>
              <Line>色 2</Line>
            </BigButton>
            <Palette>
              {PALETTE.map((c, i) => <Swatch key={i} $c={c} />)}
            </Palette>
            <BigButton $w={51}>
              <BigIcon $lift={2}><Framed $rainbow /></BigIcon>
              <Line>编辑</Line>
              <Line>颜色</Line>
            </BigButton>
          </Group>

          <Group w={92} pad={0} label="">
            <BigButton $w={88}>
              <BigIcon $lift={2}><Framed><BalloonIcon /></Framed></BigIcon>
              <Line>使用画图 3</Line>
              <Line>D 进行编辑</Line>
            </BigButton>
          </Group>
        </Ribbon>

        <Middle>
          <Workspace><Paper><Drawing /></Paper></Workspace>
          <VScroll>
            <ScrollEnd $w={18} $h={21}><Chevron d="M1.500 8.500L6 4l4.500 4.500" /></ScrollEnd>
            <ScrollThumb $w={19} $h={380} />
            <ScrollEnd $w={18} $h={20} $m="auto 0 2px"><Chevron d="M1.500 3.500L6 8l4.500-4.500" /></ScrollEnd>
          </VScroll>
        </Middle>
        <HScroll>
          <ScrollEnd $w={21} $h={18}><Chevron d="M7.500 1.500L3 6l4.500 4.500" /></ScrollEnd>
          <ScrollThumb $w={1074} $h={19} />
          <ScrollEnd $w={20} $h={18} $m="0 22px 0 auto"><Chevron d="M3.500 1.500L8 6l-4.500 4.500" /></ScrollEnd>
        </HScroll>

        <Status>
          <StatusCell $w={222} $pad={2}><MoveIcon /></StatusCell>
          <StatusCell $w={222}><SizeIcon dotted /></StatusCell>
          <StatusCell $w={222}><SizeIcon />1911 × 855像素</StatusCell>
          <StatusCell $w={222} />
          <StatusCell $w={324} />
          <ZoomBar>
            <ZoomValue>100%</ZoomValue>
            <RoundButton />
            <Track>
              <svg width="13" height="23" viewBox="0 0 13 23"><path d="M0 0h13v17l-6.500 6L0 17z" fill="#0078d7" /></svg>
            </Track>
            <RoundButton plus />
            <Grip>
              <svg width="12" height="13" viewBox="0 0 12 13" fill="#bfbfbf"><path d="M8 0h3v3H8zM4 4h3v3H4zM8 4h3v3H8zM0 8h3v3H0zM4 8h3v3H4zM8 8h3v3H8z" /></svg>
            </Grip>
          </ZoomBar>
        </Status>
      </Window>
      <Ticker>充满开花最前线 一直上升</Ticker>
    </Desktop>
  );
}
